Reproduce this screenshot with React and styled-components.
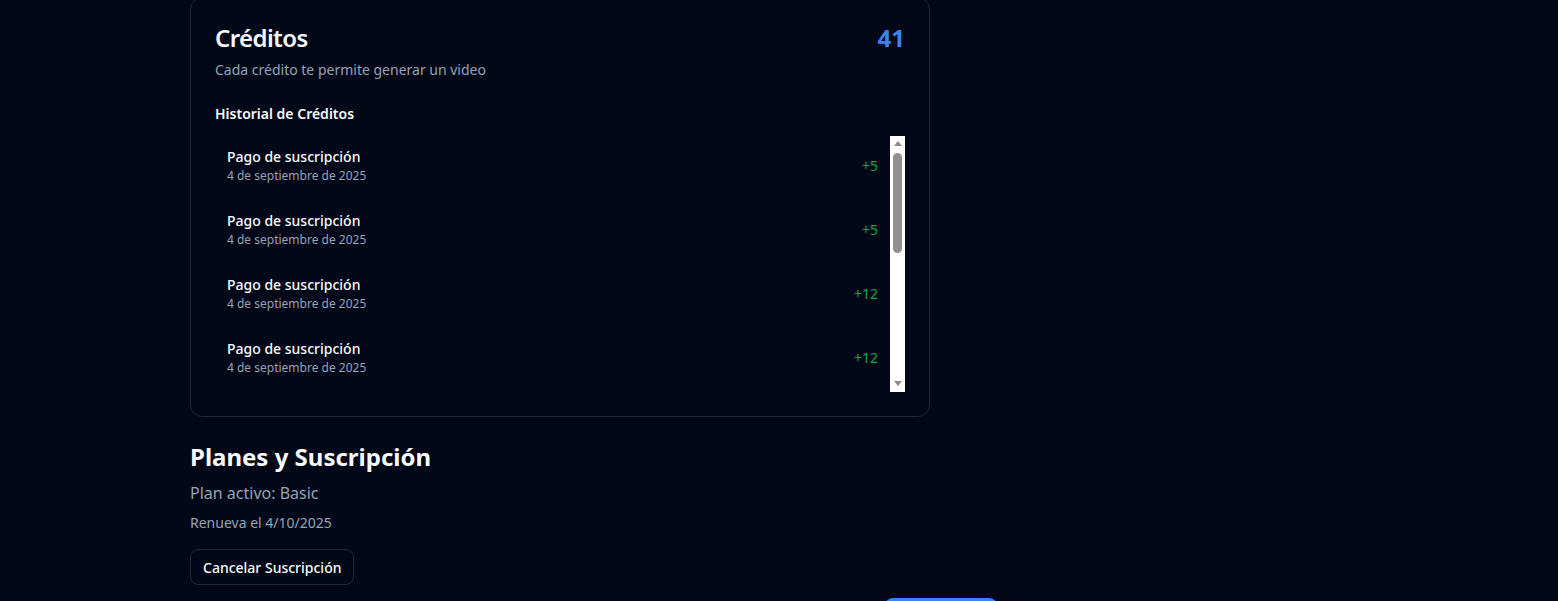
import React from 'react';
import styled, { createGlobalStyle } from 'styled-components';

const GlobalStyle = createGlobalStyle`
  html, body {
    margin: 0;
    padding: 0;
    background: #020817;
    color: #f8fafc;
    font-family: "Noto Sans", "Open Sans", sans-serif;
    overflow: hidden;
  }
`;

const Page = styled.div`
  width: 740px;
  padding-left: 190px;
  margin-top: -3px;
`;

const Card = styled.section`
  border: 1px solid #1e293b;
  border-radius: 12px;
  padding: 24px;
`;

const CardHeader = styled.div`
  display: flex;
  justify-content: space-between;
  align-items: flex-start;
`;

const Title = styled.h2`
  margin: 0;
  font-size: 24px;
  line-height: 32px;
  font-weight: 600;
  letter-spacing: -0.6px;
`;

const Balance = styled.span`
  font-size: 24px;
  line-height: 32px;
  font-weight: 700;
  color: #3b82f6;
`;

const Subtitle = styled.p`
  margin: 6px 0 0;
  font-size: 14px;
  line-height: 20px;
  color: #94a3b8;
`;

const SectionLabel = styled.h3`
  margin: 24px 0 12px;
  font-size: 14px;
  line-height: 20px;
  font-weight: 600;
`;

const ListFrame = styled.div`
  display: flex;
  height: 256px;
`;

const ScrollList = styled.ul`
  flex: 1;
  list-style: none;
  margin: 0;
  padding: 0;
  overflow: hidden;
  display: flex;
  flex-direction: column;
  gap: 4px;
`;

const Track = styled.div`
  width: 15px;
  flex-shrink: 0;
  background: #ffffff;
  display: flex;
  flex-direction: column;
  align-items: center;
`;

const Arrow = styled.div`
  width: 0;
  height: 0;
  border-left: 4.5px solid transparent;
  border-right: 4.5px solid transparent;
  ${(p) => (p.$down
    ? 'border-top: 5px solid #8c8c8c; margin-top: auto; margin-bottom: 6px;'
    : 'border-bottom: 5px solid #8c8c8c; margin-top: 5px;')}
`;

const Thumb = styled.div`
  width: 9px;
  height: 100px;
  margin-top: 7px;
  border-radius: 5px;
  background: #909090;
`;

const Item = styled.li`
  display: flex;
  justify-content: space-between;
  align-items: center;
  padding: 11px 12px 12px;
  flex-shrink: 0;
`;

const ItemTitle = styled.div`
  font-size: 14px;
  line-height: 20px;
  font-weight: 500;
`;

const ItemDate = styled.div`
  font-size: 12px;
  line-height: 17px;
  color: #94a3b8;
`;

const Amount = styled.span`
  font-size: 14px;
  line-height: 20px;
  color: ${(p) => (p.$negative ? '#ef4444' : '#16a34a')};
`;

const Plans = styled.section`
  margin-top: 24px;
`;

const PlansTitle = styled.h2`
  margin: 0;
  font-size: 24px;
  line-height: 32px;
  font-weight: 700;
`;

const PlanActive = styled.p`
  margin: 8px 0 0;
  font-size: 16px;
  line-height: 24px;
  color: #94a3b8;
`;

const Renew = styled.p`
  margin: 8px 0 0;
  font-size: 14px;
  line-height: 20px;
  color: #94a3b8;
`;

const OutlineButton = styled.button`
  margin-top: 16px;
  height: 36px;
  padding: 0 12px;
  background: transparent;
  border: 1px solid #1e293b;
  border-radius: 8px;
  color: #f8fafc;
  font-family: inherit;
  font-size: 14px;
  font-weight: 500;
  cursor: pointer;
`;

const PlanRow = styled.div`
  display: flex;
  padding-left: 695px;
  margin-top: 13px;
`;

const PrimaryButton = styled.button`
  flex-shrink: 0;
  width: 112px;
  height: 36px;
  border: none;
  border-radius: 8px;
  background: #3b82f6;
  color: #fff;
  font-family: inherit;
  font-size: 14px;
  font-weight: 500;
`;

const historial = [
  { id: 1, concepto: 'Pago de suscripción', fecha: '4 de septiembre de 2025', cantidad: 5 },
  { id: 2, concepto: 'Pago de suscripción', fecha: '4 de septiembre de 2025', cantidad: 5 },
  { id: 3, concepto: 'Pago de suscripción', fecha: '4 de septiembre de 2025', cantidad: 12 },
  { id: 4, concepto: 'Pago de suscripción', fecha: '4 de septiembre de 2025', cantidad: 12 },
];

export default function App() {
  return (
    <>
      <GlobalStyle />
      <Page>
        <Card>
          <CardHeader>
            <Title>Créditos</Title>
            <Balance>41</Balance>
          </CardHeader>
          <Subtitle>Cada crédito te permite generar un video</Subtitle>
          <SectionLabel>Historial de Créditos</SectionLabel>
          <ListFrame>
            <ScrollList>
              {historial.map((h) => (
                <Item key={h.id}>
                  <div>
                    <ItemTitle>{h.concepto}</ItemTitle>
                    <ItemDate>{h.fecha}</ItemDate>
                  </div>
                  <Amount $negative={h.cantidad < 0}>
                    {h.cantidad > 0 ? `+${h.cantidad}` : h.cantidad}
                  </Amount>
                </Item>
              ))}
            </ScrollList>
            <Track aria-hidden="true">
              <Arrow />
              <Thumb />
              <Arrow $down />
            </Track>
          </ListFrame>
        </Card>

        <Plans>
          <PlansTitle>Planes y Suscripción</PlansTitle>
          <PlanActive>Plan activo: Basic</PlanActive>
          <Renew>Renueva el 4/10/2025</Renew>
          <OutlineButton>Cancelar Suscripción</OutlineButton>
        </Plans>

        <PlanRow>
          <PrimaryButton>Mensual</PrimaryButton>
        </PlanRow>
      </Page>
    </>
  );
}
